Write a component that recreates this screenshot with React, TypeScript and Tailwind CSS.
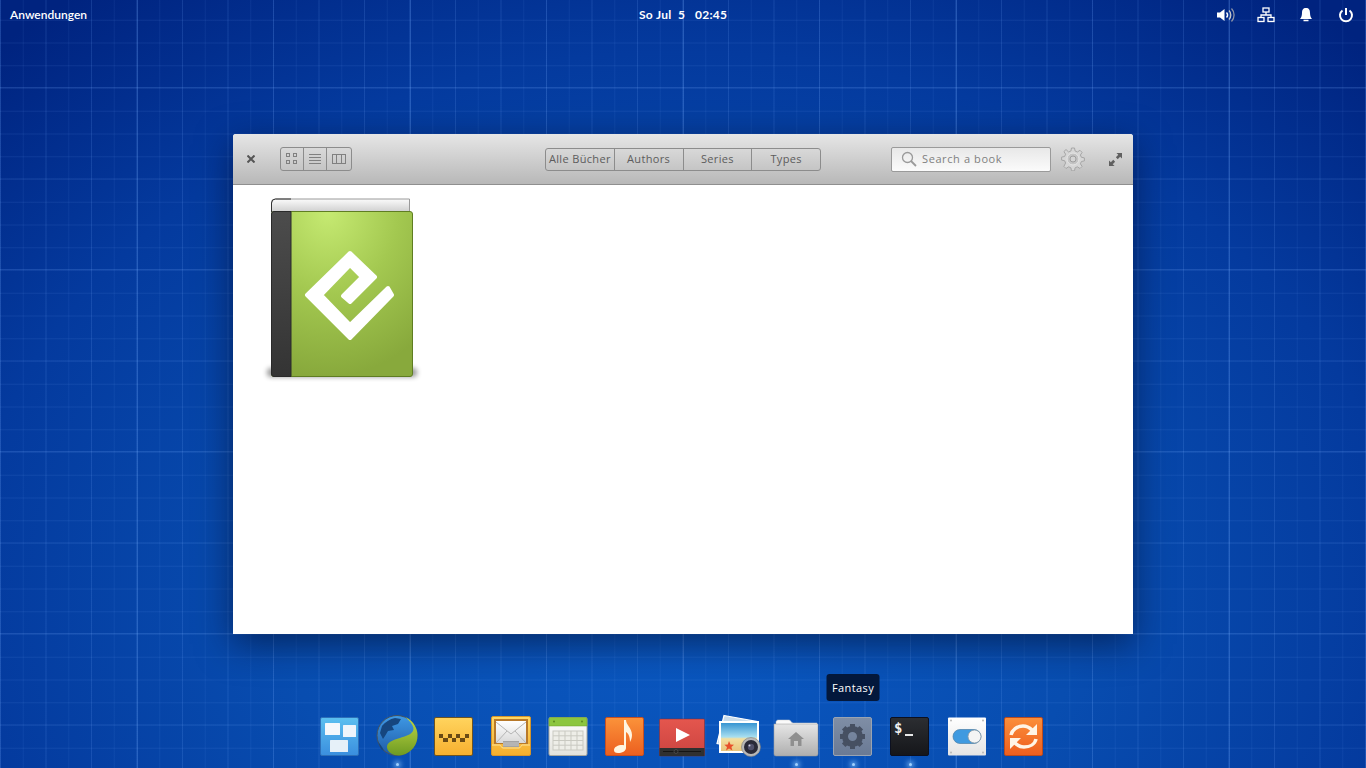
import { ReactNode } from "react";

const Ico = ({ children }: { children: ReactNode }) => (
  <svg width="44" height="44" viewBox="0 0 44 44" className="overflow-visible">
    {children}
  </svg>
);

const Grad = ({ id, from, to }: { id: string; from: string; to: string }) => (
  <linearGradient id={id} x1="0" y1="0" x2="0" y2="1">
    <stop offset="0" stopColor={from} />
    <stop offset="1" stopColor={to} />
  </linearGradient>
);

// dock icons, left to right
const Windows = () => (
  <Ico>
    <defs>
      <Grad id="w1" from="#5cc0f0" to="#3a8ede" />
    </defs>
    <rect x="2.500" y="3.500" width="38" height="38" rx="1.500" fill="url(#w1)" stroke="#2d6fb8" />
    <rect x="7" y="9" width="15" height="12" rx="0.500" fill="#f4f8fc" />
    <rect x="25" y="11" width="13" height="12" rx="0.500" fill="#eef5fb" />
    <rect x="12" y="26" width="18" height="12" rx="0.500" fill="#e6f0f8" />
  </Ico>
);

const Globe = () => (
  <Ico>
    <defs>
      <Grad id="g1" from="#3f9ae6" to="#1f5aa6" />
      <Grad id="g2" from="#c0d844" to="#6d9a22" />
    </defs>
    <circle cx="22" cy="21.500" r="20" fill="url(#g1)" stroke="#46525c" strokeWidth="1" />
    <path d="M7 12c3-4 8-7 13-8l6 1-3 5-6 2 2 4-6 1-3 5-2 3-3-6z" fill="#16467f" />
    <path d="M3 28c2 2 4 4 6 9l-3-2z" fill="#16467f" />
    <path
      d="M30 3C36 8 40 13 38 17C36 21 30 22 25 24C18 26 12 28 12 33C12 38 18 41.500 24 41.500A20 20 0 0 0 30 3z"
      fill="url(#g2)"
    />
  </Ico>
);

const Taxi = () => (
  <Ico>
    <defs>
      <Grad id="t1" from="#ffd45e" to="#f7b02f" />
    </defs>
    <rect x="2.500" y="3.500" width="38" height="38" rx="1.500" fill="url(#t1)" stroke="#6d5322" />
    <path d="M7 20h4v4H7zM16 20h4v4h-4zM24 20h4v4h-4zM33 20h4v4h-4zM11 24h5v4h-5zM20 24h4v4h-4zM28 24h5v4h-5z" fill="#6a4a14" />
  </Ico>
);

const Mail = () => (
  <Ico>
    <defs>
      <Grad id="m1" from="#ffd866" to="#f4ae2c" />
      <Grad id="m2" from="#ffffff" to="#d8d8d8" />
    </defs>
    <rect x="2.500" y="2.500" width="39" height="39" rx="1.500" fill="url(#m1)" stroke="#d6952a" />
    <rect x="5" y="5" width="34" height="25" fill="#b8792a" />
    <rect x="7" y="7" width="30" height="22" fill="url(#m2)" />
    <path d="M7 8l15 12L37 8M7 29l11-12M37 29L26 17" stroke="#b5b5b5" fill="none" />
    <rect x="14" y="27" width="16" height="6" fill="#a3a3a3" />
    <path d="M14 29h16M14 31h16" stroke="#d6d6d6" strokeWidth="0.700" />
    <path d="M3 31h8c1 0 1 3 3 3h16c2 0 2-3 3-3h8" stroke="#fbe29a" fill="none" />
  </Ico>
);

const Calendar = () => (
  <Ico>
    <defs>
      <Grad id="c1" from="#ffffff" to="#e2e2dc" />
    </defs>
    <rect x="3" y="3.500" width="38" height="38" rx="1.500" fill="url(#c1)" stroke="#a8a8a0" />
    <path d="M3 12V5A1.500 1.500 0 0 1 4.500 3.500h35A1.500 1.500 0 0 1 41 5V12z" fill="#8cc63f" stroke="#6f9e2c" strokeWidth="0.500" />
    <circle cx="8" cy="7.500" r="1" fill="#5c8a22" />
    <circle cx="36" cy="7.500" r="1" fill="#5c8a22" />
    <g stroke="#c9c9c1" strokeWidth="1" fill="#eeeee8">
      <rect x="7" y="17" width="30" height="19" />
      <path d="M13 17v19M19 17v19M25 17v19M31 17v19M7 21.800h30M7 26.500h30M7 31.200h30" fill="none" />
    </g>
  </Ico>
);

const Music = () => (
  <Ico>
    <defs>
      <Grad id="n1" from="#fb933a" to="#ec5f1f" />
    </defs>
    <rect x="2.500" y="3.500" width="38" height="38" rx="1.500" fill="url(#n1)" stroke="#c74f20" />
    <path d="M21 6h2c0 5 6 8 6 15 0 3-1 5-2 7 0-6-2-9-4-10v16c0 3-4 5-8 5-3 0-4-1-4-3 0-3 4-5 8-5 1 0 2 0 2 .5z" fill="#fff5e0" />
  </Ico>
);

const Video = () => (
  <Ico>
    <defs>
      <Grad id="v1" from="#e4564e" to="#cc4440" />
    </defs>
    <rect x="-0.500" y="5" width="45" height="37" rx="1" fill="url(#v1)" stroke="#8a2a28" strokeWidth="0.500" />
    <rect x="-0.500" y="34" width="45" height="8" fill="#303030" />
    <path d="M3 37.500h38" stroke="#151515" strokeWidth="1" />
    <circle cx="16" cy="37.500" r="2" fill="#222" stroke="#555" strokeWidth="0.700" />
    <path d="M16 14l14 7-14 7z" fill="#fff" />
  </Ico>
);

const Photos = () => (
  <Ico>
    <defs>
      <linearGradient id="p1" x1="0" y1="0" x2="0" y2="1">
        <stop offset="0" stopColor="#2f8fd0" />
        <stop offset="0.5" stopColor="#a8dff0" />
        <stop offset="0.56" stopColor="#f3dfa0" />
        <stop offset="1" stopColor="#e7c279" />
      </linearGradient>
    </defs>
    <path d="M7 1.500l33 6-6 28-34-6z" fill="#c9dcec" stroke="#fff" strokeWidth="1.200" />
    <rect x="3" y="8" width="38" height="30" fill="url(#p1)" stroke="#fff" strokeWidth="2" />
    <path d="M12 27l1.500 3.500 3.500.2-2.600 2.200 1 3.500-3.400-2-3 2 1-3.500-2.700-2.200 3.500-.2z" fill="#e8502a" />
    <circle cx="34" cy="33" r="9.500" fill="#b8b8b8" stroke="#7b7b7b" strokeWidth="0.600" />
    <circle cx="34" cy="33" r="7" fill="#2a2a38" />
    <circle cx="34" cy="33" r="3.200" fill="#50506a" />
    <circle cx="32.500" cy="31.500" r="1" fill="#cfcfe0" />
  </Ico>
);

const Home = () => (
  <Ico>
    <defs>
      <Grad id="h1" from="#e6e6e6" to="#aeaeae" />
    </defs>
    <path d="M2 8c0-1 1-2 2-2h11c2 0 2 3 4 3h24v6H2z" fill="#fafafa" stroke="#c8c8c8" strokeWidth="0.500" />
    <path d="M0 10h44v30a2 2 0 0 1-2 2H2a2 2 0 0 1-2-2z" fill="url(#h1)" stroke="#9a9a9a" strokeWidth="0.500" />
    <path d="M22 18l8 7h-2.500v7H24v-5h-4v5h-3.500v-7H14z" fill="#8f8f8f" />
  </Ico>
);

const Cog = () => (
  <Ico>
    <defs>
      <Grad id="s1" from="#7f8ea6" to="#6a7a94" />
    </defs>
    <rect x="2.500" y="3.500" width="38" height="38" rx="1.500" fill="url(#s1)" stroke="#9aa4b2" />
    <circle cx="21.500" cy="22.500" r="7.500" fill="none" stroke="#465062" strokeWidth="6" />
    <path d="M21.500 10v5M21.500 30v5M9 22.500h5M29 22.500h5M12.700 13.700l3.500 3.500M26.800 27.800l3.500 3.500M12.700 31.300l3.500-3.500M26.800 17.200l3.500-3.500" stroke="#465062" strokeWidth="5" />
  </Ico>
);

const Terminal = () => (
  <Ico>
    <defs>
      <Grad id="x1" from="#2c2e32" to="#15161a" />
    </defs>
    <rect x="2.500" y="3.500" width="38" height="38" rx="1.500" fill="url(#x1)" stroke="#0c1020" />
    <text x="6" y="19" fontSize="14" fontWeight="700" fill="#f0f0f0" fontFamily="'DejaVu Sans Mono', monospace">$</text>
    <rect x="17" y="20" width="8" height="2" fill="#e8e8e8" />
  </Ico>
);

const Toggle = () => (
  <Ico>
    <defs>
      <Grad id="y1" from="#ffffff" to="#e4e4e4" />
    </defs>
    <rect x="3" y="3.500" width="38" height="38" rx="1" fill="url(#y1)" />
    <rect x="8" y="15.500" width="28" height="14" rx="7" fill="#3f9ae0" stroke="#4a7fa8" strokeWidth="0.700" />
    <circle cx="29.500" cy="22.500" r="6.500" fill="#f4f4f4" stroke="#8a9aa6" strokeWidth="0.800" />
    <g fill="#b8b8b8">
      <circle cx="6" cy="6.500" r="1" />
      <circle cx="38" cy="6.500" r="1" />
      <circle cx="6" cy="38.500" r="1" />
      <circle cx="38" cy="38.500" r="1" />
    </g>
  </Ico>
);

const Sync = () => (
  <Ico>
    <defs>
      <Grad id="z1" from="#fb8f3a" to="#ee5e1e" />
    </defs>
    <rect x="2.500" y="3.500" width="38" height="38" rx="1.500" fill="url(#z1)" stroke="#b94a1e" />
    <path d="M9 21c1-5 6-9 12-9 4 0 7 2 9 4" fill="none" stroke="#fff5e6" strokeWidth="3.500" />
    <path d="M35 10v11H24z" fill="#fff5e6" />
    <path d="M34 25c-1 5-6 8-12 8-4 0-7-2-9-4" fill="none" stroke="#fff5e6" strokeWidth="3.500" />
    <path d="M8 35V24h11z" fill="#fff5e6" />
  </Ico>
);

const dock = [
  { el: <Windows /> },
  { el: <Globe />, running: true },
  { el: <Taxi /> },
  { el: <Mail /> },
  { el: <Calendar /> },
  { el: <Music /> },
  { el: <Video /> },
  { el: <Photos /> },
  { el: <Home />, running: true },
  { el: <Cog />, running: true, tip: "Fantasy" },
  { el: <Terminal />, running: true },
  { el: <Toggle /> },
  { el: <Sync /> },
];

const BookCover = () => (
  <svg width="160" height="188" viewBox="0 0 160 188">
    <defs>
      <radialGradient id="cover" cx="0.4" cy="0" r="1">
        <stop offset="0" stopColor="#c6ea72" />
        <stop offset="0.5" stopColor="#a3c850" />
        <stop offset="1" stopColor="#88a93c" />
      </radialGradient>
      <Grad id="spine" from="#4c4c4c" to="#343434" />
      <Grad id="pages" from="#fbfbfb" to="#cfcfcf" />
      <filter id="soft" x="-20%" y="-100%" width="140%" height="300%">
        <feGaussianBlur stdDeviation="2.500" />
      </filter>
    </defs>
    <rect x="5" y="172" width="150" height="9" rx="4" fill="#000" opacity="0.4" filter="url(#soft)" />
    <path d="M9.500 7a4 4 0 0 1 4-4h134v13H9.500z" fill="url(#pages)" stroke="#9a9a9a" />
    <path d="M29 3H13.500a4 4 0 0 0-4 4v9" fill="none" stroke="#333" />
    <rect x="9.500" y="15.500" width="141" height="165" rx="2.500" fill="url(#cover)" stroke="#5f7d22" />
    <path d="M12 15.500h17v165H12a2.500 2.500 0 0 1-2.500-2.500V18a2.500 2.500 0 0 1 2.500-2.500z" fill="url(#spine)" stroke="#2a2a2a" />
    <path
      d="M88 57 L113 81 L88 106 L81 100 L100 81 L88 69 L59 99 L88 129 L126 92 L130 99 L88 142 L45 99 Z"
      fill="#fff"
      stroke="#fff"
      strokeWidth="4"
      strokeLinejoin="round"
    />
  </svg>
);

const tabs = ["Alle Bücher", "Authors", "Series", "Types"];

export default function App() {
  return (
    <div className="relative flex h-[768px] w-[1366px] flex-col overflow-hidden bg-[radial-gradient(ellipse_1000px_760px_at_50%_78%,#0a58c2_0%,#084db0_40%,#043a9e_72%,#00237f_100%)] [font-family:'Open_Sans',sans-serif]">
      {/* blueprint grid */}
      <div className="pointer-events-none absolute inset-0 [background-image:linear-gradient(90deg,rgba(120,175,255,.2)_1px,transparent_1px),linear-gradient(90deg,rgba(120,175,255,.09)_1px,transparent_1px),linear-gradient(90deg,rgba(120,175,255,.09)_1px,transparent_1px),linear-gradient(90deg,rgba(120,175,255,.08)_1px,transparent_1px),linear-gradient(0deg,rgba(120,175,255,.12)_1px,transparent_1px),linear-gradient(0deg,rgba(120,175,255,.09)_1px,transparent_1px),linear-gradient(0deg,rgba(120,175,255,.1)_1px,transparent_1px)] [background-position:137px_0px,0px_0px,0px_0px,0px_0px,0px_88px,0px_-3px,0px_-2px] [background-size:273px_100%,136.5px_100%,45.5px_100%,22.75px_100%,100%_182px,100%_91px,100%_22.75px]" />

      {/* top panel */}
      <div className="relative flex h-[30px] items-center justify-between px-[10px] text-white">
        <span className="[font-family:Lato,sans-serif] text-[12px] font-semibold">Anwendungen</span>
        <span className="absolute left-[639px] [font-family:Lato,sans-serif] text-[12px] font-bold tracking-[0.3px] whitespace-pre">
          So Jul  5   02:45
        </span>
        <div className="flex items-center gap-[20px]">
          <svg width="20" height="16" viewBox="0 0 20 16">
            <path d="M1 5.500h3L8.500 2v12L4 10.500H1z" fill="#fff" />
            <path d="M10.500 5.500a3.500 3.500 0 0 1 0 5" stroke="#fff" strokeWidth="1.500" fill="none" />
            <path d="M13 3.500a6.500 6.500 0 0 1 0 9" stroke="#ccc" strokeWidth="1.300" fill="none" />
            <path d="M15.500 1.500a9.500 9.500 0 0 1 0 13" stroke="#8b93a8" strokeWidth="1.300" fill="none" />
          </svg>
          <svg width="20" height="16" viewBox="0 0 20 16" fill="none" stroke="#fff" strokeWidth="1.300">
            <rect x="7" y="1" width="6" height="4" />
            <rect x="2" y="10.500" width="6" height="4" />
            <rect x="12" y="10.500" width="6" height="4" />
            <path d="M10 5v3M5 10.500V8h10v2.500" />
          </svg>
          <svg width="20" height="16" viewBox="0 0 20 16">
            <path d="M10 1c3 0 4 2 4 5 0 3 1 5 2 6H4c1-1 2-3 2-6 0-3 1-5 4-5z" fill="#fff" />
            <path d="M7.500 13.500h5" stroke="#fff" strokeWidth="1.500" />
          </svg>
          <svg width="20" height="16" viewBox="0 0 20 16" fill="none" stroke="#fff" strokeWidth="2">
            <path d="M10 1v7" />
            <path d="M6.500 3.500a6 6 0 1 0 7 0" />
          </svg>
        </div>
      </div>

      {/* window */}
      <div className="relative mx-auto mt-[104px] flex h-[500px] w-[900px] flex-col overflow-hidden rounded-t-[3px] bg-white shadow-[0_10px_36px_rgba(0,0,20,.5)]">
        <div className="flex h-[51px] items-center border-b border-[#8f8f8f] bg-gradient-to-b from-[#e6e6e6] to-[#b8b8b8] text-[11px] text-[#5c5c5c]">
          <svg className="ml-[14px]" width="8" height="8" viewBox="0 0 8 8" stroke="#555" strokeWidth="2">
            <path d="M0.500 0.500l7 7M7.500 0.500l-7 7" />
          </svg>
          <div className="ml-[25px] flex h-[24px] w-[72px] rounded-[3px] border border-[#8c8c8c]">
            <div className="flex w-[23px] items-center justify-center border-r border-[#8c8c8c]">
              <svg width="14" height="12" viewBox="0 0 14 12" fill="none" stroke="#808080">
                <rect x="1.500" y="0.500" width="3" height="3" />
                <rect x="8.500" y="0.500" width="3" height="3" />
                <rect x="1.500" y="7.500" width="3" height="3" />
                <rect x="8.500" y="7.500" width="3" height="3" />
              </svg>
            </div>
            <div className="flex w-[23px] items-center justify-center border-r border-[#8c8c8c]">
              <svg width="14" height="12" viewBox="0 0 14 12" stroke="#808080">
                <path d="M1 1.500h12M1 4.500h12M1 7.500h12M1 10.500h12" />
              </svg>
            </div>
            <div className="flex flex-1 items-center justify-center">
              <svg width="14" height="12" viewBox="0 0 14 12" fill="none" stroke="#808080">
                <rect x="0.500" y="1.500" width="13" height="9" />
                <path d="M4.500 1.500v9M9.500 1.500v9" />
              </svg>
            </div>
          </div>
          <div className="ml-[193px] flex h-[23px] w-[276px] rounded-[3px] border border-[#8c8c8c]">
            {tabs.map((t, i) => (
              <div
                key={t}
                className={`flex flex-1 items-center justify-center pt-px whitespace-nowrap tracking-[0.35px] ${i < 3 ? "border-r border-[#8c8c8c]" : ""}`}
              >
                {t}
              </div>
            ))}
          </div>
          <div className="ml-[70px] flex h-[25px] w-[160px] items-center rounded-[2px] border border-[#9a9a9a] bg-gradient-to-b from-[#e8e8e8] to-[#fbfbfb] pl-[9px] text-[#808080]">
            <svg width="16" height="16" viewBox="0 0 16 16" fill="none" stroke="#9a9a9a" strokeWidth="1.300">
              <circle cx="6.500" cy="6.500" r="5" />
              <path d="M10 10l5 5" strokeWidth="1.800" />
            </svg>
            <span className="ml-[5px] pt-px tracking-[0.6px]">Search a book</span>
          </div>
          <svg className="ml-[10px]" width="24" height="24" viewBox="0 0 24 24">
            <path
              d="M10.500 1h3l.6 3 2.300 1 2.600-1.700 2.100 2.100L19.400 8l1 2.300 3 .6v3l-3 .6-1 2.300 1.700 2.600-2.100 2.100-2.600-1.700-2.300 1-.6 3h-3l-.6-3-2.300-1-2.600 1.700-2.100-2.100L4.600 16l-1-2.300-3-.6v-3l3-.6 1-2.300-1.700-2.600 2.100-2.100L7.600 5l2.300-1z"
              fill="#d6d6d6"
              stroke="#a6a6a6"
            />
            <circle cx="12" cy="12" r="6" fill="#c4c4c4" stroke="#e6e6e6" />
            <circle cx="12" cy="12" r="3" fill="#d4d4d4" stroke="#9e9e9e" />
          </svg>
          <svg className="ml-[24px]" width="13" height="13" viewBox="0 0 14 14" fill="#606060">
            <path d="M8 0h6v6l-2-2-2.600 2.600L7.400 4.600 10 2z" />
            <path d="M6 14H0V8l2 2 2.600-2.600 2 2L4 12z" />
          </svg>
        </div>
        <div className="flex-1 pt-[11px] pl-[29px]">
          <BookCover />
        </div>
      </div>

      {/* dock */}
      <div className="relative mt-[80px] flex justify-center pr-[2px]">
        {dock.map((item, i) => (
          <div key={i} className="relative flex h-[44px] w-[57px] items-center justify-center">
            {item.el}
            {item.tip && (
              <div className="absolute top-[-40px] left-1/2 h-[27px] w-[53px] -translate-x-1/2 rounded-[3px] bg-[#03183c] pt-[5px] text-center text-[11px] leading-[18px] tracking-[0.4px] text-white">
                {item.tip}
              </div>
            )}
            {item.running && (
              <div className="absolute top-[49px] h-[3px] w-[3px] rounded-full bg-[#9fd0ff] shadow-[0_0_5px_2px_rgba(140,200,255,.7)]" />
            )}
          </div>
        ))}
      </div>
    </div>
  );
}
